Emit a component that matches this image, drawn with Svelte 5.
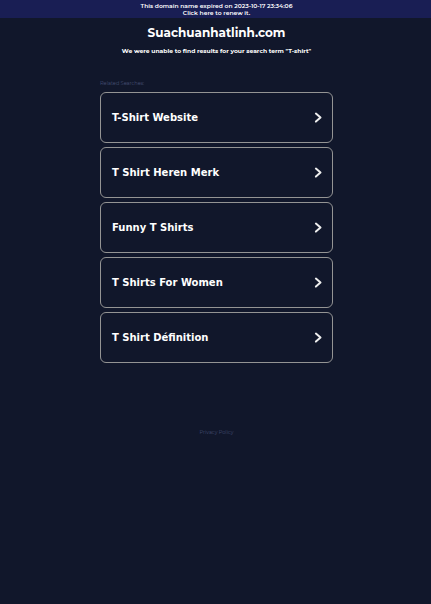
<script>
  const searches = [
    'T-Shirt Website',
    'T Shirt Heren Merk',
    'Funny T Shirts',
    'T Shirts For Women',
    'T Shirt Définition'
  ];
</script>

<div class="page">
  <a class="banner" href="#renew">
    <span>This domain name expired on 2023-10-17 23:34:06</span>
    <span>Click here to renew it.</span>
  </a>

  <div class="content">
    <header>
      <h1>Suachuanhatlinh.com</h1>
      <p>We were unable to find results for your search term "T-shirt"</p>
    </header>

    <main>
      <h2>Related Searches:</h2>
      <ul>
        {#each searches as term}
          <li>
            <a class="card" href="#search">
              <span>{term}</span>
              <svg viewBox="0 0 8 12" width="8" height="12" aria-hidden="true">
                <path d="M1.9 1.6 6.5 5.6 1.9 9.6" />
              </svg>
            </a>
          </li>
        {/each}
      </ul>
    </main>

    <footer><a href="#privacy">Privacy Policy</a></footer>
  </div>
</div>

<style>
  :global(body) {
    margin: 0;
    background: #11172b;
  }

  .page {
    min-height: 100vh;
    color: #fff;
    font-family: Montserrat, Inter, 'Open Sans', sans-serif;
    text-align: center;
  }

  a {
    color: inherit;
    text-decoration: none;
  }

  .banner {
    display: flex;
    flex-direction: column;
    padding: 3px 0 1px 2px;
    background: #191e54;
    font-size: 6px;
    font-weight: 600;
    line-height: 7px;
  }

  .content {
    padding: 6px 0 0 2px;
  }

  h1 {
    margin: 0;
    font-size: 12px;
    font-weight: 700;
    line-height: 17px;
  }

  p {
    margin: 6px 0 0;
    font-size: 6px;
    font-weight: 700;
    line-height: 8px;
  }

  main {
    width: 54%;
    min-width: 233px;
    margin: 25px auto 0;
  }

  h2 {
    margin: 0 0 5px;
    color: #465075;
    font-size: 5px;
    font-weight: 400;
    line-height: 7px;
    text-align: left;
  }

  ul {
    display: flex;
    flex-direction: column;
    gap: 4px;
    margin: 0;
    padding: 0;
    list-style: none;
  }

  .card {
    display: flex;
    align-items: center;
    justify-content: space-between;
    box-sizing: border-box;
    min-height: 51px;
    padding: 1px 10px 0 11px;
    border: 1px solid #949494;
    border-radius: 6px;
    font-family: Verdana, 'DejaVu Sans', sans-serif;
    font-size: 10px;
    font-weight: 700;
    line-height: 14px;
    text-align: left;
  }

  svg {
    fill: none;
    stroke: #eee;
    stroke-width: 2;
    stroke-linecap: round;
    stroke-linejoin: round;
  }

  footer {
    margin-top: 65px;
    color: #414b70;
    font-size: 5px;
    line-height: 8px;
  }
</style>
